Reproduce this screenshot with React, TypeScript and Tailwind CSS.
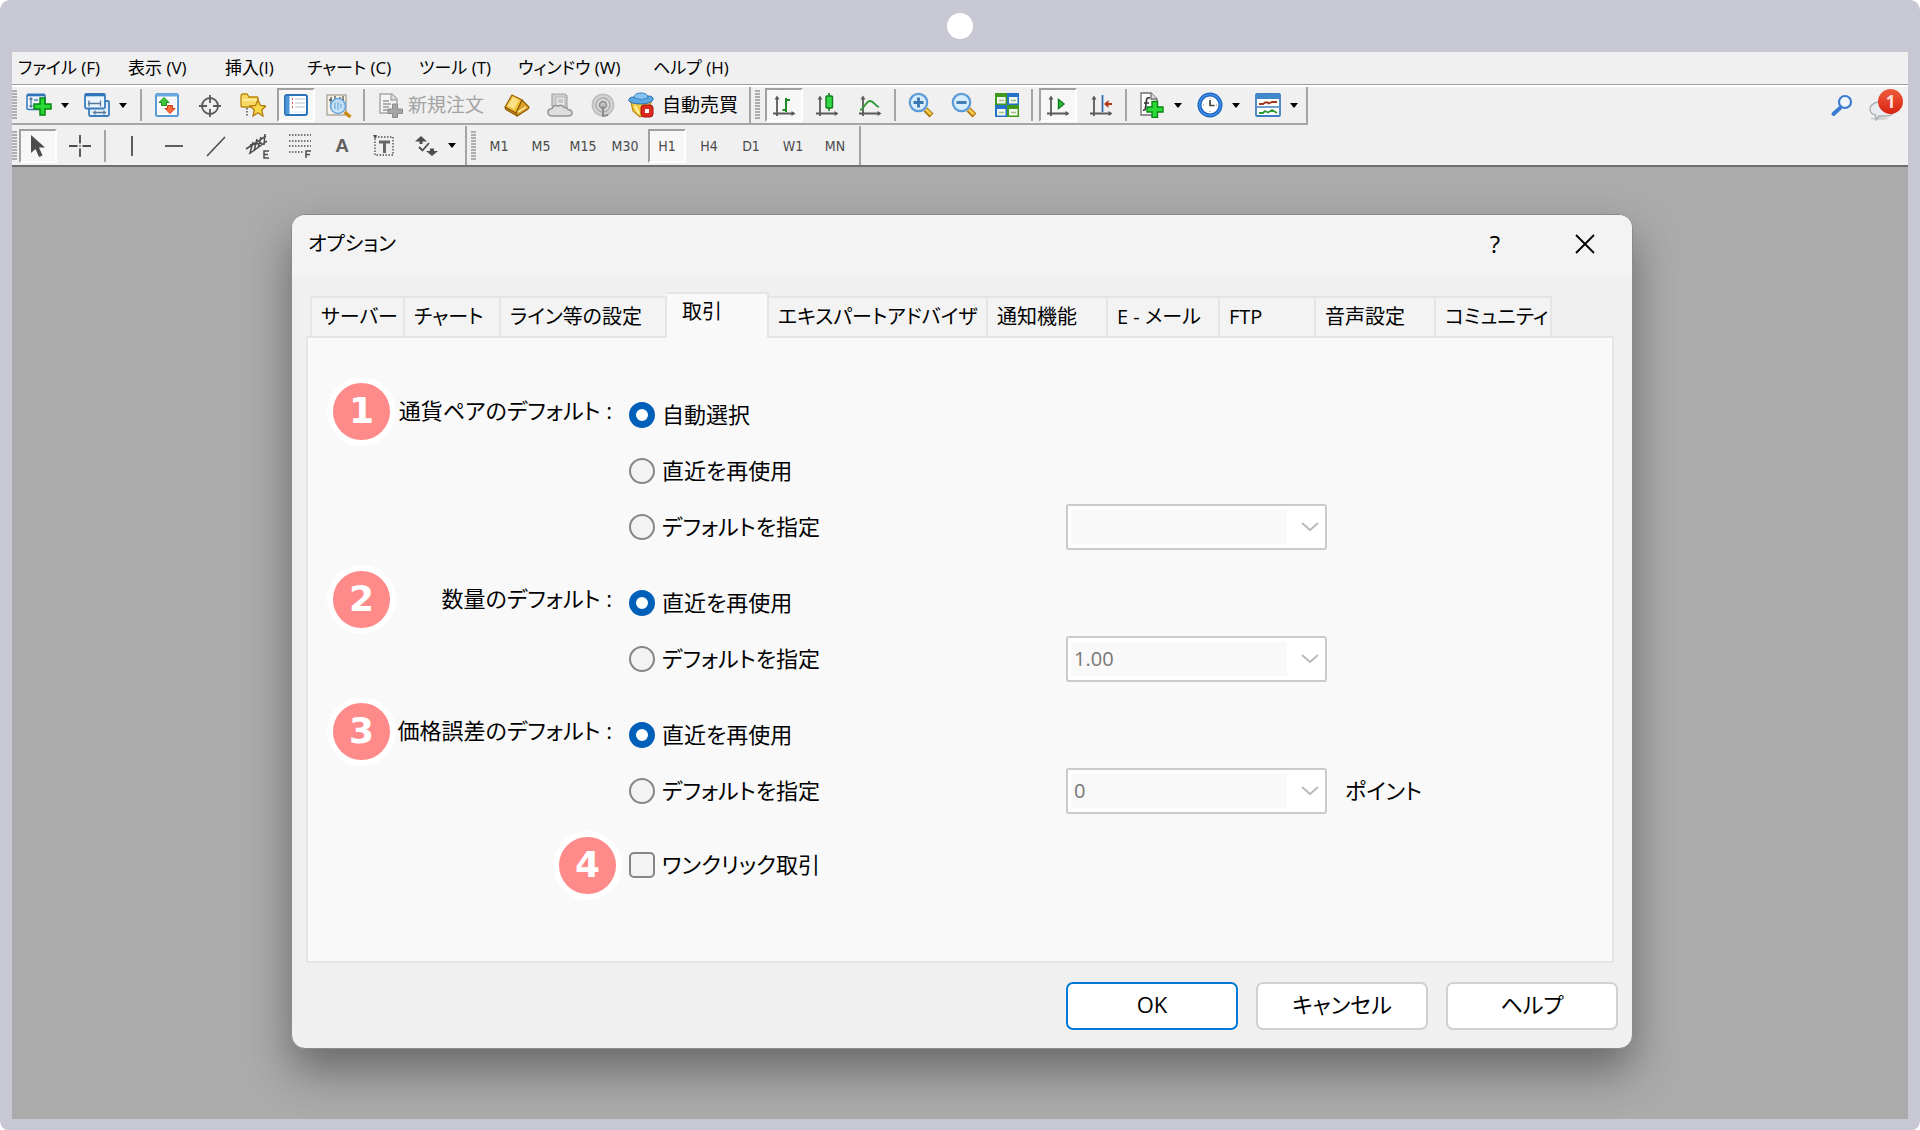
import { useState } from "react"
import type { ReactNode } from "react"
import clsx from "clsx"

/* ---------- icons ---------- */

function Icon({ children }: { children: ReactNode }) {
  return (
    <svg viewBox="0 0 26 26" className="size-[26px] shrink-0" fill="none" aria-hidden="true">
      {children}
    </svg>
  )
}

const NewChartIcon = () => (
  <Icon>
    <rect x="1" y="2.500" width="18" height="15" rx="1.5" fill="#eaf4fd" stroke="#3b7dbd" strokeWidth="1.6" />
    <path d="M1 3h18" stroke="#2f74b8" strokeWidth="2.600" />
    <path d="M5 6v9M3.500 7.500 5 6l1.5 1.5M3.500 13.500 5 15l1.5-1.5M8 8h4" stroke="#56789a" strokeWidth="1.3" />
    <path d="M14 6h5v6h6v5h-6v6h-5v-6H8v-5h6z" fill="#2bdb35" stroke="#0b8414" strokeWidth="1.5" />
  </Icon>
)

const ProfilesIcon = () => (
  <Icon>
    <rect x="5" y="9" width="20" height="15" rx="1.5" fill="#e3f0fb" stroke="#3b7dbd" strokeWidth="1.8" />
    <path d="M9 20.500h13M11 18.500v4M20 18.500v4" stroke="#56789a" strokeWidth="1.3" />
    <rect x="1" y="2" width="20" height="14.500" rx="1.5" fill="#eaf4fd" stroke="#3b7dbd" strokeWidth="1.8" />
    <path d="M1 3h20" stroke="#2f74b8" strokeWidth="2.600" />
    <path d="M4 11.500h13M5 8.500v6M16.500 8.500v6" stroke="#56789a" strokeWidth="1.3" />
  </Icon>
)

const MarketWatchIcon = () => (
  <Icon>
    <rect x="2" y="2" width="22" height="22" rx="1.500" fill="#fff" stroke="#5b9bd5" strokeWidth="2" />
    <path d="M2 3h22" stroke="#6aa8e0" strokeWidth="3" />
    <path d="M13 8h9M13 11h9M4 17h9M4 20h9" stroke="#dfe5ea" />
    <path d="m10 5.500 5 5h-2.500v3h-5v-3H5z" fill="#3fc43a" stroke="#1a8a1a" />
    <path d="M13.500 13.500h5v3H21l-5 5-5-5h2.500z" fill="#ff6a3c" stroke="#d23a14" />
  </Icon>
)

const TargetIcon = () => (
  <Icon>
    <circle cx="13" cy="14" r="8" stroke="#5a5a5a" strokeWidth="1.8" />
    <path d="M13 3v8M13 17v8M2 14h8M16 14h8" stroke="#5a5a5a" strokeWidth="1.8" />
  </Icon>
)

const NavigatorIcon = () => (
  <Icon>
    <path d="M1 14V4q0-2 2-2h4l2 3h8q1 0 1 1v9H2z" fill="#f7d964" stroke="#b8860b" strokeWidth="1.300" />
    <path d="M2 8h15" stroke="#fff2b0" strokeWidth="1.500" />
    <path d="M7 16v9" stroke="#333" strokeWidth="1.300" strokeDasharray="1.500 1.500" />
    <path d="m18 8 2.400 5.500 5.600.5-4.300 3.900L23 24l-5-3.200L13 24l1.300-6.100L10 14l5.600-.5z" fill="#f9d84a" stroke="#b27a0c" strokeWidth="1.300" />
  </Icon>
)

const TerminalIcon = () => (
  <Icon>
    <rect x="2" y="3" width="22" height="20" rx="2" fill="#fff" stroke="#2b72b8" strokeWidth="2" />
    <path d="M4.500 4v18" stroke="#4f97d8" strokeWidth="4" />
    <path d="M9 7h1M9 11h1M9 15h1" stroke="#e02020" strokeWidth="1.500" />
    <path d="M12 7h10M12 11h10M12 15h10" stroke="#b9c2cc" strokeWidth="1.200" />
    <path d="M7 20h16" stroke="#dcebf8" />
  </Icon>
)

const TesterIcon = () => (
  <Icon>
    <rect x="1" y="3" width="19" height="20" fill="#f7f2e8" stroke="#a9a294" strokeWidth="1.300" />
    <path d="M5 5v8M9 4v7M14 5v8M17 4v9M3 8h3M14 8h4" stroke="#555" strokeWidth="1.300" />
    <circle cx="12" cy="14" r="7.500" fill="#bfe0fa" fillOpacity=".9" stroke="#6aa7db" strokeWidth="1.600" />
    <path d="M9 11v6M12 10v8M15 12v4" stroke="#7fb2dc" strokeWidth="1.400" />
    <path d="m18.500 20 6 5" stroke="#c98a12" strokeWidth="3.500" />
  </Icon>
)

const NewOrderIcon = () => (
  <Icon>
    <path d="M2 2h12l5 5v14H2z" fill="#f4f4f4" stroke="#a8a8a8" strokeWidth="1.500" />
    <path d="M13 2v6h6" fill="#ddd" stroke="#a8a8a8" strokeWidth="1.300" />
    <path d="M5 9h6M5 12h8M5 15h6M5 18h5" stroke="#999" strokeWidth="1.300" />
    <path d="M14.500 12h5v5h5v4.500h-5v4h-5v-4H10V17h4.500z" fill="#a6a6a6" stroke="#8c8c8c" />
  </Icon>
)

const MetaEditorIcon = () => (
  <Icon>
    <path d="M1 15 8 3l10 5-6 13z" fill="#f2c23c" stroke="#9a6407" strokeWidth="1.300" />
    <path d="m3.500 14 5.500-9 6 3-5 9z" fill="#fbe188" />
    <path d="m18 8 7 7-1 2-11 7-1-3z" fill="#dba027" stroke="#8f5c06" strokeWidth="1.200" />
    <path d="m1 15 .5 2.500L13 24l-1-3z" fill="#b97c12" stroke="#8f5c06" />
    <path d="m14 20 8-5" stroke="#ffe69a" strokeWidth="1.500" />
  </Icon>
)

const MqlCommunityIcon = () => (
  <Icon>
    <path d="M5 2h13l2 2v12H7l-2-2z" fill="#cfcfcf" stroke="#a6a6a6" strokeWidth="1.200" />
    <path d="M9 5h9v9H9z" fill="#e9e9e9" stroke="#b3b3b3" />
    <path d="M11 7h5v4h-5z" fill="#c6c6c6" />
    <path d="M5 24q-4 0-4-4 0-3 4-3.500 2-4 6-2.500 4-2 6 1.500 3-.5 4 2 4 .5 4 3.500 0 3-4 3z" fill="#dedede" stroke="#949494" strokeWidth="1.500" />
  </Icon>
)

const SignalsIcon = () => (
  <Icon>
    <circle cx="13" cy="13" r="11.500" fill="#d6d6d6" />
    <circle cx="13" cy="13" r="10.500" stroke="#bdbdbd" strokeWidth="1.500" />
    <circle cx="13" cy="13" r="7" fill="#dedede" stroke="#b2b2b2" strokeWidth="1.800" />
    <circle cx="13" cy="13" r="3.500" fill="#c2c2c2" stroke="#8f8f8f" strokeWidth="1.600" />
    <path d="M13 14v10q3 0 5-1.500" stroke="#8c8c8c" strokeWidth="2" />
  </Icon>
)

const AutoTradingIcon = () => (
  <Icon>
    <path d="M3 10h20l-3 10-8 5-7-6z" fill="#f6cd3a" stroke="#b98712" strokeWidth="1.200" />
    <path d="m7 14 4 8" stroke="#fff3b5" strokeWidth="2" />
    <path d="M1 9q-1-4 5-4l14-1q6 0 5 4-3 4-12 4T1 9z" fill="#5ba8e2" stroke="#2e70ab" />
    <path d="M6 6q0-5 7-5t7 5q-6 3-14 0z" fill="#86c4f2" stroke="#3a83c0" />
    <rect x="13" y="13" width="12" height="12" rx="3" fill="#dc2a1e" stroke="#a71509" />
    <rect x="17" y="17" width="4" height="4" fill="#fff" />
  </Icon>
)

const Axes = () => (
  <>
    <path d="M6 5v19M2 21.500h21" stroke="#5a5a5a" strokeWidth="1.800" />
    <path d="m3.500 7.500 2.500-4 2.500 4zM20.500 19l4 2.500-4 2.500z" fill="#5a5a5a" />
  </>
)

const BarChartIcon = () => (
  <Icon>
    <Axes />
    <path d="M15 6v14M15 8h4M11.500 18H15" stroke="#1c8a24" strokeWidth="2" />
  </Icon>
)

const CandleChartIcon = () => (
  <Icon>
    <Axes />
    <path d="M15 1v18" stroke="#127a1a" strokeWidth="1.600" />
    <rect x="12" y="4" width="6.500" height="12" rx="1" fill="#33d845" stroke="#127a1a" strokeWidth="1.400" />
  </Icon>
)

const LineChartIcon = () => (
  <Icon>
    <Axes />
    <path d="M3 18c4-1 6-9 10-9s5 5 9 6" stroke="#2f9a36" strokeWidth="1.800" />
  </Icon>
)

const ZoomGlass = ({ plus }: { plus?: boolean }) => (
  <Icon>
    <path d="m17.500 17.500 6 6" stroke="#a8730c" strokeWidth="5.500" />
    <path d="m18 17.500 5 5" stroke="#f6cb4d" strokeWidth="3" />
    <circle cx="10.500" cy="10.500" r="8.700" fill="#d8edfc" stroke="#5c9bd6" strokeWidth="2.200" />
    <path d={plus ? "M5.500 10.500h10M10.500 5.500v10" : "M5.500 10.500h10"} stroke="#3a76b0" strokeWidth="2.800" />
  </Icon>
)

const TileIcon = () => (
  <Icon>
    <rect x="1" y="1" width="12" height="12" fill="#3f9a1c" />
    <rect x="13" y="1" width="12" height="12" fill="#2573c9" />
    <rect x="1" y="13" width="12" height="12" fill="#2573c9" />
    <rect x="13" y="13" width="12" height="12" fill="#3f9a1c" />
    <path d="M3 5h8.500v6.500H3zM15 5h8.500v6.500H15zM3 17h8.500v6.500H3zM15 17h8.500v6.500H15z" fill="#f3f8ee" />
    <path d="M5 8.500h5M17 8.500h5M5 20.500h5M17 20.500h5" stroke="#9dbf8c" strokeWidth="1.500" />
  </Icon>
)

const AutoScrollIcon = () => (
  <Icon>
    <Axes />
    <path d="M13.500 7.500v9l5.500-4.500z" fill="#35c244" stroke="#0f7d1b" strokeWidth="1.400" />
  </Icon>
)

const ChartShiftIcon = () => (
  <Icon>
    <Axes />
    <path d="M14.500 3v17" stroke="#2f6fae" strokeWidth="1.800" />
    <path d="M18 12h6" stroke="#b23a10" strokeWidth="2" />
    <path d="m16 12 4.500-4v8z" fill="#b23a10" />
  </Icon>
)

const IndicatorsIcon = () => (
  <Icon>
    <path d="M2 1h10l6 6v16H2z" fill="#fff" stroke="#707070" strokeWidth="1.300" />
    <path d="M12 1v6h6" fill="#ddd" stroke="#707070" strokeWidth="1.300" />
    <path d="M11 6q-3-1-3.500 2l-1 8q-.5 3-2.500 2M5 11h5" stroke="#333" strokeWidth="1.600" />
    <path d="M13 9.500h5.500V15H24v5h-5.500v5.500H13V20H8v-5h5z" fill="#2bdb35" stroke="#0b8414" strokeWidth="1.400" />
  </Icon>
)

const PeriodsIcon = () => (
  <Icon>
    <circle cx="13" cy="13" r="10.500" fill="#fff" stroke="#1a63bd" strokeWidth="4" />
    <circle cx="13" cy="13" r="10.500" stroke="#3f8ee6" strokeWidth="1.500" />
    <path d="M13 8v5.500h4.500" stroke="#444" strokeWidth="1.700" />
    <path d="M13 6v1M13 19v1M6 13h1M19 13h1" stroke="#888" />
  </Icon>
)

const TemplatesIcon = () => (
  <Icon>
    <rect x="1" y="2" width="24" height="22" rx="1" fill="#fff" stroke="#3d7fc1" strokeWidth="1.800" />
    <path d="M1 4.500h24" stroke="#4488cc" strokeWidth="5" />
    <path d="M2 15h22" stroke="#3d7fc1" strokeWidth="1.500" />
    <path d="M4 12h4l2-1.500h3l1 1 3-1.500h5" stroke="#a03a1c" strokeWidth="1.800" />
    <path d="M4 21h4l2-2 3 1.500 4-2.500 5 3" stroke="#2c9a34" strokeWidth="1.800" />
  </Icon>
)

const PointerIcon = () => (
  <Icon>
    <path d="M6 2v18l4.500-4 3.500 8 3.500-1.500-3.500-8h6z" fill="#4d4d4d" />
  </Icon>
)

const CrossIcon = () => (
  <Icon>
    <path d="M13 2v8.500M13 15.500V24M2 13h8.500M15.500 13H24" stroke="#4d4d4d" strokeWidth="1.800" />
    <path d="M12 13h2" stroke="#4d4d4d" />
  </Icon>
)

const VLineIcon = () => (
  <Icon>
    <path d="M13 3v20" stroke="#4d4d4d" strokeWidth="1.800" />
  </Icon>
)

const HLineIcon = () => (
  <Icon>
    <path d="M4 13h18" stroke="#4d4d4d" strokeWidth="1.800" />
  </Icon>
)

const TrendLineIcon = () => (
  <Icon>
    <path d="M4 23 22 4" stroke="#4d4d4d" strokeWidth="1.600" />
  </Icon>
)

const ChannelIcon = () => (
  <Icon>
    <path d="M1 16 21 3M4 21 22 8M8 9l-3 11M12 6 9 18M16 4l-3 11M20 1l-1 11M5 12l12-2" stroke="#4d4d4d" strokeWidth="1.500" />
    <path d="M24 18h-5v7h5M19 21.500h4" stroke="#4d4d4d" strokeWidth="1.500" />
  </Icon>
)

const FiboIcon = () => (
  <Icon>
    <path d="M2 2h22M2 8h22M2 13h22M2 19h14" stroke="#4d4d4d" strokeWidth="1.500" strokeDasharray="1.500 1.500" />
    <path d="M19 25v-7h5M19 21.500h4" stroke="#4d4d4d" strokeWidth="1.500" />
  </Icon>
)

const TextBoxIcon = () => (
  <Icon>
    <rect x="4" y="4" width="18" height="18" stroke="#4d4d4d" strokeWidth="1.400" strokeDasharray="1.500 1.500" />
    <path d="M2 2h4l-2 4z" fill="#4d4d4d" />
    <path d="M8 9h11M13.500 9v11" stroke="#666" strokeWidth="3" />
  </Icon>
)

const ArrowsIcon = () => (
  <Icon>
    <path d="m8 3 6 5.500H9.500V11h-3V8.500H2z" fill="#4d4d4d" />
    <path d="m19 23-6-5h4v-2.500h4V18h4z" fill="#4d4d4d" />
    <path d="m6 14 3.500 3.500L16 10" stroke="#4d4d4d" strokeWidth="1.800" />
  </Icon>
)

const SearchIcon = () => (
  <Icon>
    <path d="m4.500 22 6.500-6" stroke="#3b7cd0" strokeWidth="4" strokeLinecap="round" />
    <circle cx="16" cy="10" r="6" fill="#f2f7fd" stroke="#3b7cd0" strokeWidth="2.200" />
  </Icon>
)

/* ---------- toolbar parts ---------- */

type ToolProps = { label: string; children: ReactNode; pressed?: boolean; narrow?: boolean }

function Tool({ label, children, pressed, narrow }: ToolProps) {
  return (
    <button
      type="button"
      aria-label={label}
      aria-pressed={pressed}
      className={clsx("flex h-[36px] shrink-0 items-center justify-center", narrow ? "w-[42px]" : "w-[43px]")}
    >
      <span
        className={clsx(
          "flex h-[34px] w-[38px] items-center justify-center",
          pressed && "border-2 border-t-[#a0a0a0] border-r-white border-b-white border-l-[#a0a0a0] bg-[#f7f7f7]",
        )}
      >
        {children}
      </span>
    </button>
  )
}

function Caret({ label }: { label: string }) {
  return (
    <button type="button" aria-label={label} className="flex h-[36px] w-[10px] shrink-0 items-center justify-center">
      <svg viewBox="0 0 8 5" className="h-[5px] w-[8px]" aria-hidden="true">
        <path d="M0 0h8L4 5z" fill="#000" />
      </svg>
    </button>
  )
}

const Separator = () => <span className="mx-[3px] h-[32px] w-[2px] shrink-0 bg-[#a5a5a5]" />

const Grip = () => (
  <span className="h-[30px] w-[5px] shrink-0 bg-[repeating-linear-gradient(#adadad_0_2px,#f0f0f0_2px_3px)]" />
)

const menus = ["ファイル (F)", "表示 (V)", "挿入(I)", "チャート (C)", "ツール (T)", "ウィンドウ (W)", "ヘルプ (H)"]

const periods = ["M1", "M5", "M15", "M30", "H1", "H4", "D1", "W1", "MN"]

function MenuBar() {
  return (
    <nav className="grid h-[33px] grid-cols-[110px_97px_82px_112px_99px_135px_auto] items-center justify-start border-b border-[#a0a0a0] pl-[6px] text-[17px] leading-6">
      {menus.map((menu) => (
        <button key={menu} type="button" className="whitespace-nowrap text-left">
          {menu}
        </button>
      ))}
    </nav>
  )
}

function StandardToolbar() {
  return (
    <div className="flex h-[41px] items-start border-t-2 border-white">
      <div className="flex h-[38px] items-center border-r-2 border-b-2 border-[#a5a5a5] pr-[11px]">
        <Grip />
        <Tool label="新規チャート">
          <NewChartIcon />
        </Tool>
        <Caret label="新規チャートの一覧" />
        <span className="w-[5px]" />
        <Tool label="プロファイル">
          <ProfilesIcon />
        </Tool>
        <Caret label="プロファイルの一覧" />
        <span className="w-[9px]" />
        <Separator />
        <Tool label="気配値表示">
          <MarketWatchIcon />
        </Tool>
        <Tool label="データウィンドウ">
          <TargetIcon />
        </Tool>
        <Tool label="ナビゲーター">
          <NavigatorIcon />
        </Tool>
        <Tool label="ターミナル" pressed>
          <TerminalIcon />
        </Tool>
        <Tool label="ストラテジーテスター">
          <TesterIcon />
        </Tool>
        <Separator />
        <button type="button" disabled className="ml-[10px] flex items-center gap-1 text-[19px] leading-6 whitespace-nowrap text-[#a3a3a3]">
          <NewOrderIcon />
          新規注文
        </button>
        <span className="w-[11px]" />
        <Tool label="メタエディター">
          <MetaEditorIcon />
        </Tool>
        <Tool label="コミュニティ">
          <MqlCommunityIcon />
        </Tool>
        <Tool label="シグナル">
          <SignalsIcon />
        </Tool>
        <button type="button" className="ml-1 flex items-center gap-2 text-[19px] leading-6 whitespace-nowrap">
          <AutoTradingIcon />
          自動売買
        </button>
      </div>
      <div className="flex h-[38px] items-center border-r-2 border-b-2 border-[#a5a5a5] pr-[7px] pl-[4px]">
        <Grip />
        <span className="w-[2px]" />
        <Tool label="バーチャート" pressed>
          <BarChartIcon />
        </Tool>
        <Tool label="ローソク足">
          <CandleChartIcon />
        </Tool>
        <Tool label="ラインチャート">
          <LineChartIcon />
        </Tool>
        <Separator />
        <Tool label="拡大">
          <ZoomGlass plus />
        </Tool>
        <Tool label="縮小">
          <ZoomGlass />
        </Tool>
        <Tool label="整列">
          <TileIcon />
        </Tool>
        <Separator />
        <Tool label="自動スクロール" pressed>
          <AutoScrollIcon />
        </Tool>
        <Tool label="チャートシフト">
          <ChartShiftIcon />
        </Tool>
        <Separator />
        <Tool label="インディケータ">
          <IndicatorsIcon />
        </Tool>
        <Caret label="インディケータの一覧" />
        <span className="w-[5px]" />
        <Tool label="時間足設定">
          <PeriodsIcon />
        </Tool>
        <Caret label="時間足の一覧" />
        <span className="w-[5px]" />
        <Tool label="テンプレート">
          <TemplatesIcon />
        </Tool>
        <Caret label="テンプレートの一覧" />
      </div>
      <div className="ml-auto flex h-[36px] items-center gap-[14px] pr-[5px]">
        <button type="button" aria-label="検索">
          <SearchIcon />
        </button>
        <button type="button" aria-label="通知" className="relative h-[32px] w-[34px]">
          <svg viewBox="0 0 34 32" className="h-[32px] w-[34px]" fill="none" aria-hidden="true">
            <ellipse cx="10" cy="29.500" rx="9" ry="1.500" fill="#d0d0d0" />
            <path d="M9 13h8q8 0 8 7t-8 7h-7l-3 4-.5-5Q1 25 1 20t8-7z" fill="#e9edf0" stroke="#a9adb1" strokeWidth="1.300" />
          </svg>
          <span className="absolute top-0 right-0 flex size-[25px] items-center justify-center rounded-full bg-linear-to-b from-[#ee5a3a] to-[#d81e0e] text-[17px] leading-none font-bold text-[#ffe1dc]">
            1
          </span>
        </button>
      </div>
    </div>
  )
}

function DrawingToolbar() {
  return (
    <div className="flex h-[41px] items-start border-b-2 border-[#6e6e6e]">
      <div className="flex h-[39px] items-center border-r-2 border-[#a5a5a5] pr-[8px]">
        <Grip />
        <Tool label="カーソル" pressed narrow>
          <PointerIcon />
        </Tool>
        <Tool label="クロスヘア" narrow>
          <CrossIcon />
        </Tool>
        <Separator />
        <span className="w-[2px]" />
        <Tool label="垂直線" narrow>
          <VLineIcon />
        </Tool>
        <Tool label="水平線" narrow>
          <HLineIcon />
        </Tool>
        <Tool label="トレンドライン" narrow>
          <TrendLineIcon />
        </Tool>
        <Tool label="チャネル" narrow>
          <ChannelIcon />
        </Tool>
        <Tool label="フィボナッチ" narrow>
          <FiboIcon />
        </Tool>
        <Tool label="テキスト" narrow>
          <span className="font-['Liberation_Sans'] text-[19px] leading-none font-bold text-[#606060]">A</span>
        </Tool>
        <Tool label="テキストラベル" narrow>
          <TextBoxIcon />
        </Tool>
        <Tool label="矢印" narrow>
          <ArrowsIcon />
        </Tool>
        <Caret label="矢印の一覧" />
      </div>
      <div className="flex h-[39px] items-center border-r-2 border-[#a5a5a5] pr-[3px] pl-[4px]">
        <Grip />
        <span className="w-[2px]" />
        {periods.map((period) => (
          <Tool key={period} label={period} pressed={period === "H1"} narrow>
            <span className="font-['DejaVu_Sans_Condensed','DejaVu_Sans',sans-serif] text-[14px] leading-none text-[#4a4a4a]">
              {period}
            </span>
          </Tool>
        ))}
      </div>
    </div>
  )
}

/* ---------- options dialog ---------- */

const tabs = ["サーバー", "チャート", "ライン等の設定", "取引", "エキスパートアドバイザ", "通知機能", "E - メール", "FTP", "音声設定", "コミュニティ"]

function Badge({ n }: { n: number }) {
  return (
    <span className="flex size-[69px] shrink-0 items-center justify-center rounded-full border-[6px] border-white bg-[#ff8a8a] font-['DejaVu_Sans',sans-serif] text-[36px] leading-none font-bold text-white">
      {n}
    </span>
  )
}

type OptionProps = { name: string; label: string; checked?: boolean; children?: ReactNode }

function Option({ name, label, checked, children }: OptionProps) {
  return (
    <div className="flex h-[56px] items-center">
      <label className="flex w-[437px] items-center gap-[7px] whitespace-nowrap">
        <input
          type="radio"
          name={name}
          defaultChecked={checked}
          className="size-[26px] shrink-0 appearance-none rounded-full border-2 border-[#868686] bg-[#f3f3f3] checked:border-[7px] checked:border-[#005fb8] checked:bg-white"
        />
        <span className="pb-[2px]">{label}</span>
      </label>
      {children}
    </div>
  )
}

function Combo({ label, value }: { label: string; value: string }) {
  return (
    <div className="flex h-[46px] w-[261px] shrink-0 items-center rounded-[3px] border-2 border-[#cbcbcb] bg-white pl-[3px]">
      <select
        disabled
        aria-label={label}
        defaultValue={value}
        className="h-[34px] w-[216px] appearance-none bg-[#f9f9f9] pl-[3px] text-[20px] text-[#777777] opacity-100"
      >
        <option value={value}>{value}</option>
      </select>
      <svg viewBox="0 0 18 10" className="ml-[14px] h-[10px] w-[18px]" fill="none" aria-hidden="true">
        <path d="m1 1 8 7 8-7" stroke="#b9b9b9" strokeWidth="1.800" />
      </svg>
    </div>
  )
}

function Group({ n, title, children }: { n: number; title: string; children: ReactNode }) {
  return (
    <div role="radiogroup" aria-label={title} className="mb-5 flex items-start">
      <div className="mr-[17px] flex h-[48px] shrink-0 items-center">
        <Badge n={n} />
        <span className="w-[216px] pb-[2px] text-right whitespace-nowrap">{title} :</span>
      </div>
      <div>{children}</div>
    </div>
  )
}

function TradeSettings() {
  return (
    <div className="border-2 border-[#e5e5e5] bg-[#f9f9f9] pt-[49px] pb-[70px] pl-[19px]">
      <Group n={1} title="通貨ペアのデフォルト">
        <Option name="symbol" label="自動選択" checked />
        <Option name="symbol" label="直近を再使用" />
        <Option name="symbol" label="デフォルトを指定">
          <Combo label="通貨ペア" value="" />
        </Option>
      </Group>
      <Group n={2} title="数量のデフォルト">
        <Option name="volume" label="直近を再使用" checked />
        <Option name="volume" label="デフォルトを指定">
          <Combo label="数量" value="1.00" />
        </Option>
      </Group>
      <Group n={3} title="価格誤差のデフォルト">
        <Option name="deviation" label="直近を再使用" checked />
        <Option name="deviation" label="デフォルトを指定">
          <Combo label="価格誤差" value="0" />
          <span className="ml-[18px] pb-[2px]">ポイント</span>
        </Option>
      </Group>
      <div className="flex h-[52px] items-center pl-[226px]">
        <Badge n={4} />
        <label className="ml-[7px] flex items-center gap-[7px]">
          <input type="checkbox" className="size-[26px] appearance-none rounded-[5px] border-2 border-[#868686] bg-[#f3f3f3]" />
          <span className="pb-[2px]">ワンクリック取引</span>
        </label>
      </div>
    </div>
  )
}

function OptionsDialog() {
  const [active, setActive] = useState("取引")

  return (
    <section
      role="dialog"
      aria-label="オプション"
      className="mx-auto w-full max-w-[1342px] overflow-hidden rounded-[14px] border border-[#8b8b8b] bg-[#f0f0f0] text-[22px] leading-8 shadow-[0_22px_44px_rgba(0,0,0,0.38)]"
    >
      <header className="flex h-[61px] items-center bg-[#f3f3f3] pr-[32px] pb-1 pl-[16px]">
        <h1 className="text-[20px]">オプション</h1>
        <button type="button" aria-label="ヘルプを表示" className="ml-auto w-[30px] text-[24px]">
          ?
        </button>
        <button type="button" aria-label="閉じる" className="ml-[60px] flex w-[30px] justify-center">
          <svg viewBox="0 0 20 20" className="size-5" fill="none" aria-hidden="true">
            <path d="M1 1l18 18M19 1 1 19" stroke="#000" strokeWidth="1.800" />
          </svg>
        </button>
      </header>

      <div className="pt-[16px] pr-[18px] pb-[18px] pl-[14px]">
        <div role="tablist" className="grid grid-cols-[95px_96px_166px_102px_219px_120px_112px_96px_120px_116px] items-end pl-[4px] text-[20px]">
          {tabs.map((tab) => (
            <button
              key={tab}
              type="button"
              role="tab"
              aria-selected={tab === active}
              onClick={() => setActive(tab)}
              className={clsx(
                "border-t-2 border-r-2 border-[#e5e5e5] text-left whitespace-nowrap first:border-l-2",
                tab === active ? "-mb-[2px] h-[46px] bg-[#f9f9f9] pb-2 pl-[15px]" : "h-[40px] bg-[#f3f3f3] pl-[9px]",
              )}
            >
              {tab}
            </button>
          ))}
        </div>

        <TradeSettings />

        <div className="mt-[19px] -mr-[4px] flex justify-end gap-[18px]">
          <button type="button" className="h-[48px] w-[172px] rounded-[7px] border-2 border-[#0078d4] bg-white pb-1">
            OK
          </button>
          <button type="button" className="h-[48px] w-[172px] rounded-[7px] border-2 border-[#d0d0d0] bg-white pb-1">
            キャンセル
          </button>
          <button type="button" className="h-[48px] w-[172px] rounded-[7px] border-2 border-[#d0d0d0] bg-white pb-1">
            ヘルプ
          </button>
        </div>
      </div>
    </section>
  )
}

export default function App() {
  return (
    <div className="bg-white">
      <div className="flex min-h-screen flex-col rounded-[10px] bg-[#c8c7d4] px-3 pb-3 font-['Open_Sans','Noto_Sans_CJK_JP',sans-serif] text-black [font-feature-settings:'palt']">
        <div className="flex h-[52px] items-center justify-center">
          <span className="size-[26px] rounded-full bg-white" />
        </div>
        <div className="bg-[#f0f0f0]">
          <MenuBar />
          <StandardToolbar />
          <DrawingToolbar />
        </div>
        <main className="flex-1 bg-[#ababab] pt-[47px] pb-[70px] pl-1">
          <OptionsDialog />
        </main>
      </div>
    </div>
  )
}
